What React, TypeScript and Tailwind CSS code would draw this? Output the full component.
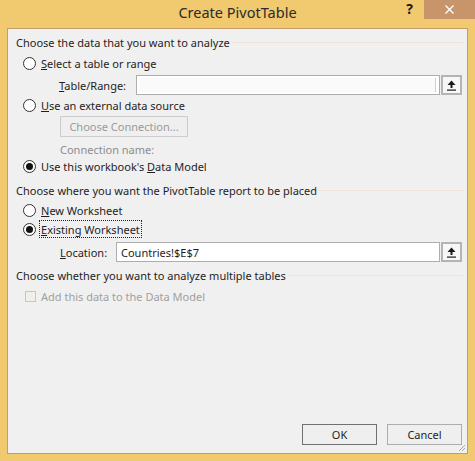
const font = "font-['Noto_Sans','Open_Sans',sans-serif]";

const UpArrowButton = () => (
  <div className="w-[21px] h-[20px] border-2 border-[#b4b4b4] bg-[#f7f7f7] flex items-center justify-center ml-[1px]">
    <svg width="11" height="11" viewBox="0 0 11 11">
      <path d="M5.5 0.5 L9.5 5 L6.5 5 L6.5 8 L4.5 8 L4.5 5 L1.5 5 Z" fill="#1a1a1a" />
      <rect x="1" y="9.5" width="9" height="1.2" fill="#1a1a1a" />
    </svg>
  </div>
);

const Radio = ({ checked }: { checked?: boolean }) => (
  <div className="w-[13px] h-[13px] rounded-full border border-[#333333] bg-white flex items-center justify-center shrink-0">
    {checked && <div className="w-[7px] h-[7px] rounded-full bg-[#111111]" />}
  </div>
);

const GroupHeader = ({ text, className }: { text: string; className?: string }) => (
  <div className={`flex items-center h-[16px] pl-[8px] pr-[4px] ${className ?? ""}`}>
    <span className="whitespace-nowrap text-[#1e1e1e]">{text}</span>
    <div className="flex-1 h-px bg-[#ece2d6] ml-[2px]" />
  </div>
);

const RadioRow = ({
  checked,
  children,
  className,
}: {
  checked?: boolean;
  children: React.ReactNode;
  className?: string;
}) => (
  <div className={`flex items-center h-[16px] pl-[15px] ${className ?? ""}`}>
    <Radio checked={checked} />
    <span className="ml-[5px] whitespace-nowrap text-[#1e1e1e]">{children}</span>
  </div>
);

export default function App() {
  return (
    <div className={`w-[475px] h-[461px] bg-[#f1c96f] flex flex-col ${font} text-[11px] leading-none`}>
      {/* Title bar */}
      <div className="h-[28px] flex items-start relative">
        <div className="absolute left-0 right-0 top-[5px] text-center text-[14.5px] text-[#2b2b2b]">
          Create PivotTable
        </div>
        <div className="ml-auto flex items-start">
          <span className="mt-[2px] mr-[11px] text-[14px] font-bold text-[#1a1a1a]">?</span>
          <div className="w-[51px] h-[19px] bg-[#c8946a] flex items-center justify-center">
            <svg width="9" height="9" viewBox="0 0 9 9">
              <path d="M0.5 0.5 L8.5 8.5 M8.5 0.5 L0.5 8.5" stroke="#ffffff" strokeWidth="1.3" />
            </svg>
          </div>
        </div>
      </div>

      {/* Client area */}
      <div className="mx-[7px] mb-[7px] flex-1 border border-[#c59c6c] bg-[#f0f0f0] flex flex-col relative">
        <GroupHeader text="Choose the data that you want to analyze" className="mt-[5px]" />

        <RadioRow className="mt-[5px]">
          <span className="underline">S</span>elect a table or range
        </RadioRow>

        <div className="flex items-center h-[20px] mt-[4px] pl-[51px] pr-[5px]">
          <span className="w-[77px] text-[#1e1e1e]">
            <span className="underline">T</span>able/Range:
          </span>
          <div className="flex-1 h-[20px] border border-[#adadad] bg-white flex">
            <div className="flex-1 m-[2px] mr-0 bg-[#fafafa]" />
            <div className="w-px bg-[#d0d0d0] my-[2px]" />
            <div className="w-[3px]" />
          </div>
          <UpArrowButton />
        </div>

        <RadioRow className="mt-[2px]">
          <span className="underline">U</span>se an external data source
        </RadioRow>

        <div className="pl-[52px] mt-[3px] flex">
          <div className="w-[128px] h-[21px] border border-[#cccccc] bg-[#efefef] flex items-center justify-center text-[#9a9a9a]">
            Choose Connection...
          </div>
        </div>

        <div className="pl-[52px] mt-[4px] h-[16px] flex items-center text-[#8c8c8c]">Connection name:</div>

        <RadioRow checked className="mt-[1px]">
          Use this workbook's <span className="underline">D</span>ata Model
        </RadioRow>

        <GroupHeader text="Choose where you want the PivotTable report to be placed" className="mt-[8px]" />

        <RadioRow className="mt-[4px]">
          <span className="underline">N</span>ew Worksheet
        </RadioRow>

        <div className="flex items-center h-[16px] pl-[15px] mt-[3px]">
          <Radio checked />
          <span className="ml-[4px] px-[1px] h-[16px] flex items-center outline-1 outline-dotted outline-[#222222] whitespace-nowrap text-[#1e1e1e]">
            <span className="underline">E</span>xisting Worksheet
          </span>
        </div>

        <div className="flex items-center h-[20px] mt-[5px] pl-[52px] pr-[5px]">
          <span className="w-[56px] text-[#1e1e1e]">
            <span className="underline">L</span>ocation:
          </span>
          <div className="flex-1 h-[20px] border border-[#adadad] bg-white flex items-center pl-[4px] text-[#1e1e1e]">
            Countries!$E$7
          </div>
          <UpArrowButton />
        </div>

        <GroupHeader text="Choose whether you want to analyze multiple tables" className="mt-[5px]" />

        <div className="flex items-center h-[16px] pl-[17px] mt-[5px]">
          <div className="w-[11px] h-[11px] border border-[#c6c6c6] bg-[#f2efe9]" />
          <span className="ml-[5px] text-[#a0a0a0] whitespace-nowrap">Add this data to the Data Model</span>
        </div>

        {/* Buttons */}
        <div className="mt-auto mb-[8px] flex justify-end gap-[10px] pr-[5px]">
          <div className="w-[75px] h-[21px] border border-[#707070] bg-[#efefef] flex items-center justify-center text-[#1e1e1e]">
            OK
          </div>
          <div className="w-[75px] h-[21px] border border-[#adadad] bg-[#efefef] flex items-center justify-center text-[#1e1e1e]">
            Cancel
          </div>
        </div>

        {/* Resize grip */}
        <svg className="absolute right-[1px] bottom-[1px]" width="8" height="8" viewBox="0 0 8 8">
          <path d="M7 1 L1 7 M7 4 L4 7" stroke="#a8a8a8" strokeWidth="1" />
        </svg>
      </div>
    </div>
  );
}
